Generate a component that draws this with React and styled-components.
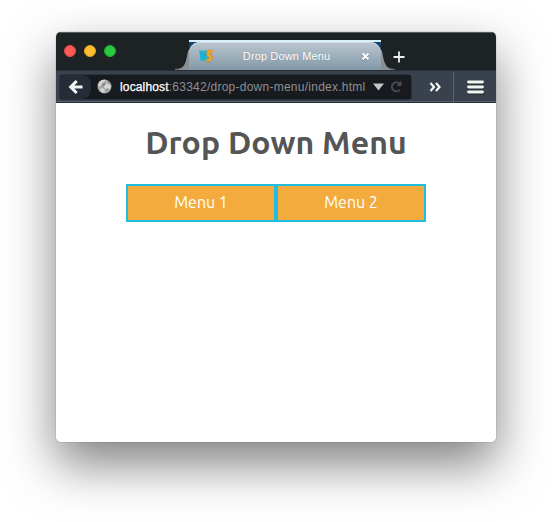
import React from "react";
import styled, { createGlobalStyle } from "styled-components";

const GlobalStyle = createGlobalStyle`
  * { box-sizing: border-box; }
  body { margin: 0; background: #fff; overflow: hidden; }
`;

const Desktop = styled.div`
  width: 552px;
  height: 522px;
  padding: 32px 56px 80px;
  background: #fff;
  overflow: hidden;
`;

const BrowserWindow = styled.div`
  width: 440px;
  height: 410px;
  display: flex;
  flex-direction: column;
  border-radius: 5px;
  background: #fff;
  box-shadow: 0 0 1px rgba(0, 0, 0, 0.65), 0 22px 50px rgba(0, 0, 0, 0.5);
  overflow: hidden;
`;

const TitleBar = styled.header`
  height: 38px;
  flex: none;
  display: flex;
  align-items: flex-start;
  background: #1d2225;
  box-shadow: inset 0 1px 0 #565b5d;
`;

const WindowControls = styled.div`
  width: 119px;
  flex: none;
  display: flex;
  gap: 8px;
  padding: 13px 0 0 8px;
`;

const Control = styled.span`
  width: 12px;
  height: 12px;
  border-radius: 50%;
  background: ${(p) => p.$fill};
  border: 1px solid ${(p) => p.$edge};
`;

const Tab = styled.div`
  display: flex;
  align-items: flex-end;
  height: 30px;
  margin-top: 8px;
`;

const TabCurve = styled.svg`
  display: block;
  flex: none;
`;

const TabFrame = styled.div`
  width: 192px;
  height: 30px;
  padding-top: 2px;
  background: linear-gradient(#d6f1fb 0 2px, #174269 2px 12px, #8298a8 12px);
`;

const TabBody = styled.div`
  height: 28px;
  display: flex;
  align-items: center;
  border-radius: 11px 11px 0 0;
  background: linear-gradient(#bcc7cf, #8198a8);
  box-shadow: inset 0 1px 0 #d3dae0;
  padding: 0 11px 0 9px;
`;

const TabTitle = styled.span`
  flex: 1;
  padding-right: 3px;
  text-align: center;
  color: #fff;
  font: 11px/14px "Liberation Sans", Arial, sans-serif;
  letter-spacing: 0.12px;
  text-shadow: 0 0 1px rgba(60, 80, 100, 0.35);
`;

const NewTab = styled.svg`
  display: block;
  margin: 18px 0 0 -3px;
`;

const Toolbar = styled.nav`
  height: 33px;
  flex: none;
  display: flex;
  align-items: center;
  padding: 1px 0 0 4px;
  background: #39414d;
  border-top: 1px solid #272e36;
  border-bottom: 1px solid #292f38;
  box-shadow: inset 0 -1px 0 #535d6b;
`;

const AddressBar = styled.div`
  width: 351px;
  height: 24px;
  margin-bottom: 1px;
  display: flex;
  align-items: center;
  border-radius: 3px;
  background: #171a1f;
  box-shadow: 0 0 0 0.5px #1c2128;
  overflow: hidden;
`;

const BackButton = styled.span`
  width: 31px;
  height: 24px;
  display: flex;
  align-items: center;
  justify-content: center;
  padding-left: 1px;
  background: #252c35;
  border-radius: 3px 9px 9px 3px;
`;

const GlobeIcon = styled.svg`
  margin: 0 8px 0 6px;
  flex: none;
`;

const Url = styled.span`
  width: 247px;
  flex: none;
  white-space: nowrap;
  color: #8e9092;
  font: 12px/16px "Liberation Sans", Arial, sans-serif;
  letter-spacing: 0.25px;
`;

const Host = styled.span`
  color: #fff;
  letter-spacing: 0.15px;
  -webkit-text-stroke: 0.25px #fff;
`;

const AddressTools = styled.span`
  display: flex;
  align-items: center;
  gap: 5px;
  margin-left: 5px;
`;

const Overflow = styled.span`
  width: 42px;
  display: flex;
  justify-content: center;
  padding-left: 7px;
`;

const MenuButton = styled.span`
  height: 31px;
  flex: 1;
  display: flex;
  align-items: center;
  justify-content: center;
  border-left: 1px solid #596270;
`;

const Page = styled.main`
  flex: 1;
  display: flex;
  flex-direction: column;
  align-items: center;
  background: #fff;
  font-family: Ubuntu, "Noto Sans", sans-serif;
`;

const Heading = styled.h1`
  margin: 17px 0 0;
  height: 44px;
  color: #555;
  font-size: 32px;
  line-height: 44px;
  font-weight: 700;
  white-space: nowrap;
  letter-spacing: 0.1px;
`;

const Menu = styled.ul`
  display: flex;
  margin: 20px 0 0;
  padding: 0;
  list-style: none;
`;

const MenuItem = styled.li`
  width: 150px;
  height: 38px;
  border: 2px solid #20bde1;
  background: #f2ab3c;
  color: #fff;
  font-size: 16px;
  line-height: 33px;
  text-align: center;
`;

const items = ["Menu 1", "Menu 2"];

export default function App() {
  return (
    <>
      <GlobalStyle />
      <Desktop>
        <BrowserWindow>
          <TitleBar>
            <WindowControls>
              <Control $fill="#ff5b55" $edge="#e54842" />
              <Control $fill="#ffbd30" $edge="#e1a125" />
              <Control $fill="#28ca42" $edge="#1eac32" />
            </WindowControls>
            <Tab>
              <TabCurve width="14" height="30" viewBox="0 0 14 30">
                <path d="M0 30C7 29.500 9 27 11 22C12.500 18 12.500 13 14 10V30Z" fill="#8c8f91" />
                <path d="M0 29.500C7 29 9 27 11 22C12.500 18 12.500 13 14 10" fill="none" stroke="#aeb0b1" strokeWidth=".6" />
              </TabCurve>
              <TabFrame>
                <TabBody>
                  <svg width="17" height="14" viewBox="0 0 17 14">
                    <path d="M1 1l2 1 1-1 2 1 1-1 2 1 1-1 1 10-2 1.500-2-1-1 1-2-1-2-.5L2 8Z" fill="#23b5d3" />
                    <path d="M3 3l2 7M6 3l1 6" stroke="#1a9dbb" strokeWidth=".7" />
                    <path d="M14.500 2.500H11.500Q10 2.500 10 4.500T12 7Q13.500 8 13 9.500T10 11.500H8.500" fill="none" stroke="#c07c20" strokeWidth="3.400" />
                    <path d="M14.500 2.500H11.500Q10 2.500 10 4.500T12 7Q13.500 8 13 9.500T10 11.500H8.500" fill="none" stroke="#f2a62c" strokeWidth="2.500" />
                  </svg>
                  <TabTitle>Drop Down Menu</TabTitle>
                  <svg width="9" height="9" viewBox="0 0 9 9">
                    <path d="M1.500 2L7.500 8M7.500 2L1.500 8" stroke="#566775" strokeWidth="2.200" />
                    <path d="M1.500 1.500L7.500 7.500M7.500 1.500L1.500 7.500" stroke="#fff" strokeWidth="2" />
                  </svg>
                </TabBody>
              </TabFrame>
              <TabCurve width="14" height="30" viewBox="0 0 14 30">
                <path d="M14 30C7 29.500 5 27 3 22C1.500 18 1.500 13 0 10V30Z" fill="#8c8f91" />
                <path d="M14 29.500C7 29 5 27 3 22C1.500 18 1.500 13 0 10" fill="none" stroke="#aeb0b1" strokeWidth=".6" />
              </TabCurve>
            </Tab>
            <NewTab width="14" height="14" viewBox="0 0 14 14">
              <path d="M7 1.500V12.500M1.500 7H12.500" stroke="#eef0f0" strokeWidth="1.800" />
            </NewTab>
          </TitleBar>
          <Toolbar>
            <AddressBar>
              <BackButton>
                <svg width="16" height="16" viewBox="0 0 16 16">
                  <path d="M8.700 2L2.700 8l6 6M3 8h11.500" fill="none" stroke="#f3f4f4" strokeWidth="3" />
                </svg>
              </BackButton>
              <GlobeIcon width="15" height="15" viewBox="0 0 15 15">
                <circle cx="7.500" cy="7.500" r="7" fill="#a8a8a8" />
                <path d="M2 3Q5 0 9 1L7 3 5 4 4 7 1 7ZM8 5l3-1 3 3-1 3-3-1-2 1-1-2ZM4 9l3 1 1 3-2 1-3-3Z" fill="#d5d5d5" />
                <path d="M5 5l3-1 1 1-3 3ZM11 2l2 2-2 1ZM9 11l2-1v3Z" fill="#8a8a8a" />
              </GlobeIcon>
              <Url><Host>localhost</Host>:63342/drop-down-menu/index.html</Url>
              <AddressTools>
                <svg width="13" height="8" viewBox="0 0 13 8">
                  <path d="M1 .5H12L6.500 7.500Z" fill="#c3c5c7" />
                </svg>
                <svg width="13" height="13" viewBox="0 0 13 13">
                  <path d="M9.300 3.500A4.500 4.500 0 1 0 9.800 9.800" fill="none" stroke="#4b4e51" strokeWidth="1.900" />
                  <path d="M11.500 .5V6H6.500Z" fill="#4b4e51" />
                </svg>
              </AddressTools>
            </AddressBar>
            <Overflow>
              <svg width="13" height="10" viewBox="0 0 13 10">
                <path d="M1.500 1L5 5 1.500 9M7 1l3.500 4L7 9" fill="none" stroke="#f5f6f6" strokeWidth="2.200" />
              </svg>
            </Overflow>
            <MenuButton>
              <svg width="17" height="15" viewBox="0 0 17 15">
                <path d="M1.500 3.200H15.500M1.500 8.200H15.500M1.500 13.200H15.500" stroke="#20262d" strokeWidth="2.500" strokeLinecap="round" />
                <path d="M1.500 2H15.500M1.500 7H15.500M1.500 12H15.500" stroke="#f1f5f2" strokeWidth="2.800" strokeLinecap="round" />
              </svg>
            </MenuButton>
          </Toolbar>
          <Page>
            <Heading>Drop Down Menu</Heading>
            <Menu>
              {items.map((label) => (
                <MenuItem key={label}>{label}</MenuItem>
              ))}
            </Menu>
          </Page>
        </BrowserWindow>
      </Desktop>
    </>
  );
}
